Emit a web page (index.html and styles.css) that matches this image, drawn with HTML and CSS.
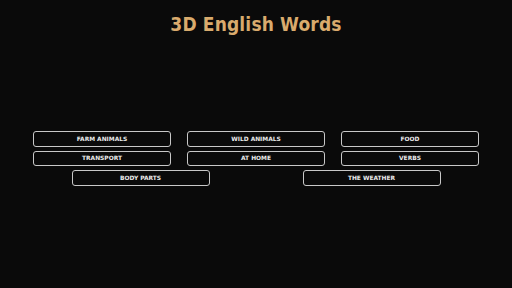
FILE: index.html
```html
<!DOCTYPE html>
<html>
<head>
<meta charset="utf-8">
<link rel="stylesheet" href="styles.css">
</head>
<body>
<div class="page">
  <h1 class="title">3D English Words</h1>
  <div class="menu">
    <div class="btn">FARM ANIMALS</div>
    <div class="btn">WILD ANIMALS</div>
    <div class="btn">FOOD</div>
    <div class="btn">TRANSPORT</div>
    <div class="btn">AT HOME</div>
    <div class="btn">VERBS</div>
    <div class="btn">BODY PARTS</div>
    <div class="btn">THE WEATHER</div>
  </div>
</div>
</body>
</html>
```
FILE: styles.css
```css
html, body {
  margin: 0;
  padding: 0;
  background: #0a0a0a;
}
.page {
  width: 512px;
  height: 288px;
  display: flex;
  flex-direction: column;
  align-items: center;
}
.title {
  margin: 12px 0 0 0;
  font-family: "DejaVu Sans Condensed", "DejaVu Sans", sans-serif;
  font-stretch: condensed;
  font-weight: bold;
  font-size: 19px;
  line-height: 24px;
  letter-spacing: 0.15px;
  color: #d9ab6d;
}
.menu {
  margin-top: 95px;
  width: 462px;
  display: flex;
  flex-wrap: wrap;
  justify-content: space-around;
  row-gap: 4px;
}
.btn {
  box-sizing: border-box;
  width: 138px;
  height: 15.5px;
  border: 1px solid #c8c8c8;
  border-radius: 3px;
  display: flex;
  align-items: center;
  justify-content: center;
  font-family: "DejaVu Sans", sans-serif;
  font-weight: bold;
  font-size: 5.9px;
  color: #ececec;
}
```
